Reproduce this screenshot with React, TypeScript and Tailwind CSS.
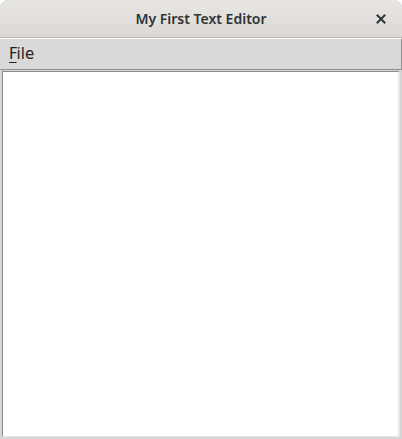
export default function App() {
  return (
    <div className="w-[402px] h-[439px] flex flex-col bg-[#d6d6d6] rounded-t-[8px] overflow-hidden font-['Noto_Sans',sans-serif]">
      {/* Title bar */}
      <div className="relative h-[38px] shrink-0 flex items-center justify-center bg-gradient-to-b from-[#e8e6e3] to-[#dcd9d5] border-b border-[#bfb8b1]">
        <span className="text-[14px] font-semibold text-[#2e3436]">My First Text Editor</span>
        <button className="absolute right-[13px] top-[11px] w-[16px] h-[16px] flex items-center justify-center">
          <svg width="10" height="10" viewBox="0 0 10 10">
            <path d="M1.5 1.5 L8.5 8.5 M8.5 1.5 L1.5 8.5" stroke="#2e3436" strokeWidth="2" strokeLinecap="square" />
          </svg>
        </button>
      </div>

      {/* Menu bar */}
      <div className="h-[32px] shrink-0 flex items-center bg-[#d9d9d9] border-t border-t-white border-b border-b-[#8e8e8e] border-r border-r-[#8e8e8e]">
        <span className="ml-[9px] text-[15px] text-[#222] font-['DejaVu_Sans',sans-serif]">
          <span className="underline underline-offset-[3px]">F</span>ile
        </span>
      </div>

      {/* Text area */}
      <div className="flex-1 flex px-[2px] pt-[1px] pb-[2px]">
        <textarea className="flex-1 resize-none bg-white outline-none border-l border-l-[#8a8a8a] border-t border-t-[#8a8a8a] border-r-2 border-r-[#e6e6e6] border-b border-b-[#e6e6e6]" />
      </div>
    </div>
  );
}
